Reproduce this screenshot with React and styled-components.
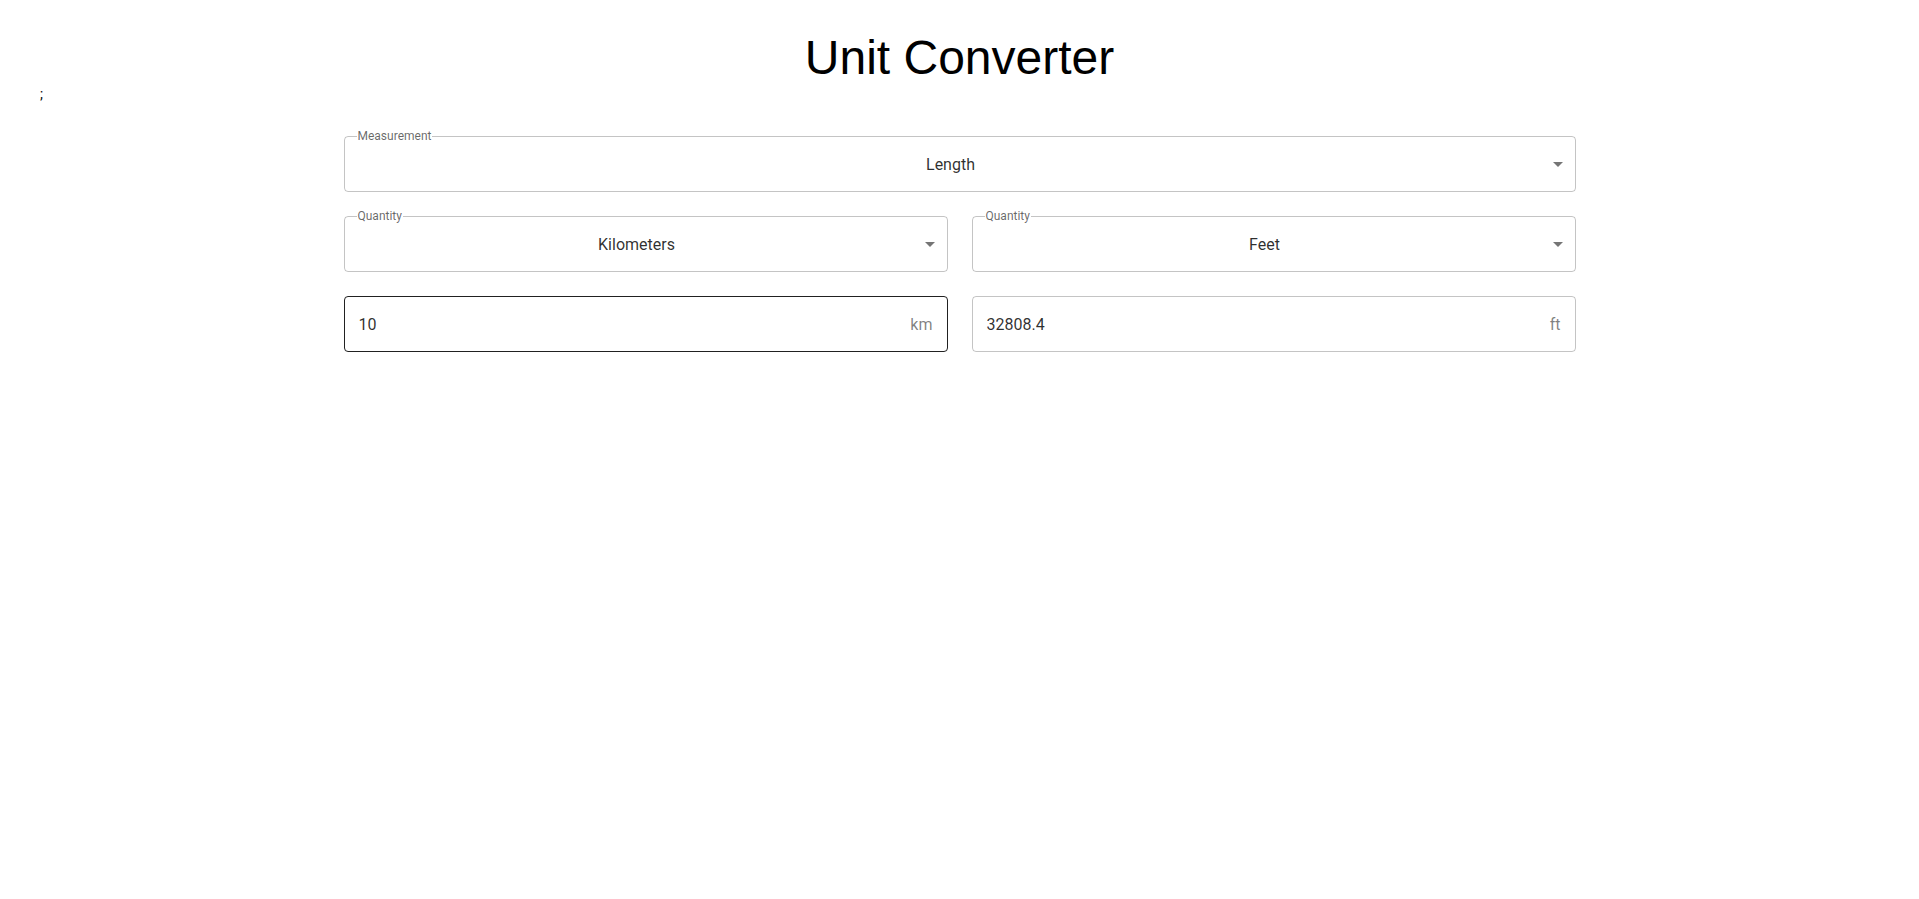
import React from "react";
import styled, { createGlobalStyle } from "styled-components";

const GlobalStyle = createGlobalStyle`
  html, body { margin: 0; padding: 0; background: #fff; }
  body {
    font-family: Roboto, "Liberation Sans", Arial, sans-serif;
    color: rgba(0, 0, 0, 0.87);
  }
`;

const Page = styled.div`
  display: flex;
  flex-direction: column;
`;

const Title = styled.h1`
  margin: 30px 0 0;
  font-family: "Liberation Sans", Arial, sans-serif;
  font-size: 48px;
  font-weight: 400;
  line-height: 56px;
  text-align: center;
  color: #000;
`;

const Stray = styled.div`
  margin-top: 0;
  padding-left: 40px;
  font-size: 14px;
  line-height: 16px;
  color: #000;
`;

const Form = styled.div`
  width: 1232px;
  margin: 34px auto 0;
  display: grid;
  grid-template-columns: 1fr 1fr;
  column-gap: 24px;
  row-gap: 24px;
`;

const Field = styled.div`
  position: relative;
  grid-column: ${(p) => (p.$full ? "1 / -1" : "auto")};
  box-sizing: border-box;
  height: 56px;
  border: 1px solid ${(p) => (p.$active ? "rgba(0,0,0,0.87)" : "rgba(0,0,0,0.23)")};
  border-radius: 4px;
  display: flex;
  align-items: center;
  font-size: 16px;
`;

const Label = styled.span`
  position: absolute;
  top: -7px;
  left: 12px;
  padding: 0 1px;
  background: #fff;
  font-size: 12px;
  line-height: 12px;
  color: rgba(0, 0, 0, 0.6);
`;

const SelectValue = styled.div`
  flex: 1;
  padding: 0 3px 0 14px;
  text-align: center;
  color: rgba(0, 0, 0, 0.82);
`;

const Arrow = styled.svg`
  width: 24px;
  height: 24px;
  margin-right: 5px;
  fill: rgba(0, 0, 0, 0.54);
  flex-shrink: 0;
`;

const InputValue = styled.div`
  flex: 1;
  padding-left: 14px;
  color: rgba(0, 0, 0, 0.82);
`;

const Adornment = styled.span`
  padding-right: 14px;
  color: rgba(0, 0, 0, 0.5);
`;

function SelectField({ label, value, full }) {
  return (
    <Field $full={full}>
      <Label>{label}</Label>
      <SelectValue>{value}</SelectValue>
      <Arrow viewBox="0 0 24 24">
        <path d="M7 10l5 5 5-5z" />
      </Arrow>
    </Field>
  );
}

function NumberField({ value, unit, active }) {
  return (
    <Field $active={active}>
      <InputValue>{value}</InputValue>
      <Adornment>{unit}</Adornment>
    </Field>
  );
}

export default function App() {
  return (
    <>
      <GlobalStyle />
      <Page>
        <Title>Unit Converter</Title>
        <Stray>;</Stray>
        <Form>
          <SelectField full label="Measurement" value="Length" />
          <SelectField label="Quantity" value="Kilometers" />
          <SelectField label="Quantity" value="Feet" />
          <NumberField active value="10" unit="km" />
          <NumberField value="32808.4" unit="ft" />
        </Form>
      </Page>
    </>
  );
}
